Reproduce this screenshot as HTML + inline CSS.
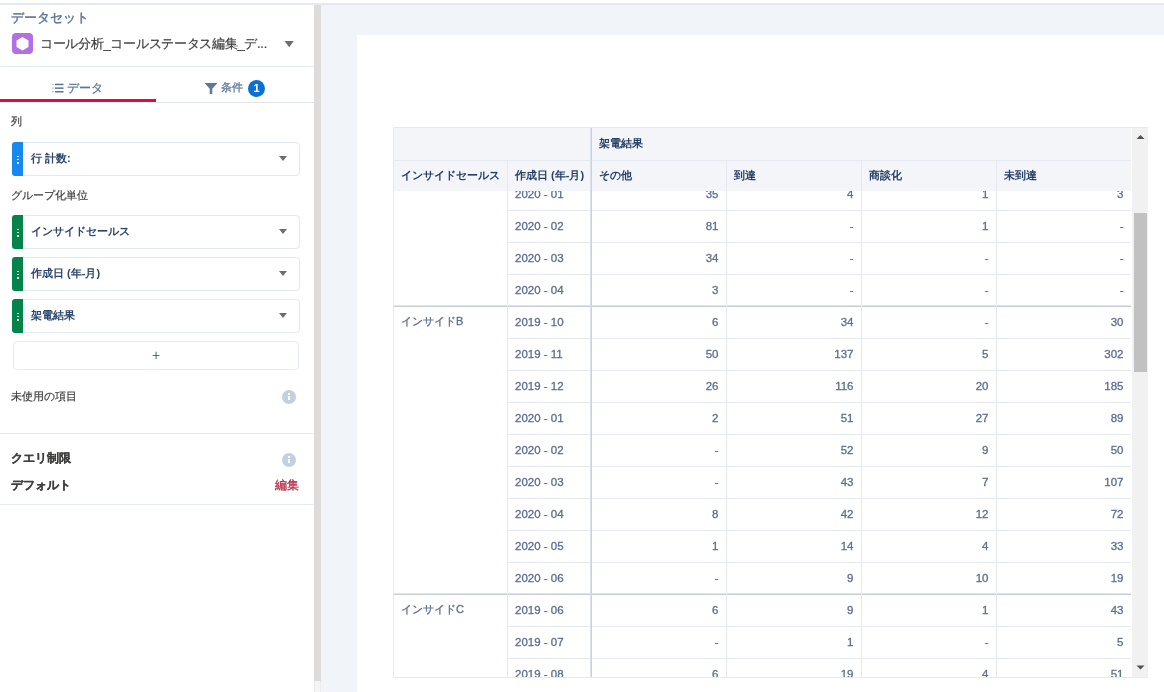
<!DOCTYPE html>
<html><head><meta charset="utf-8">
<style>
*{box-sizing:border-box;margin:0;padding:0}
html,body{width:1164px;height:692px;overflow:hidden;background:#fff;font-family:"Liberation Sans",sans-serif;}
.a{position:absolute;white-space:nowrap}
#topline{left:0;top:3px;width:1164px;height:2px;background:#e5e9ef}
#left{left:0;top:5px;width:314px;height:687px;background:#fff}
#strip{left:314px;top:5px;width:7px;height:676px;background:#dedcdb}
#strip2{left:314px;top:681px;width:7px;height:11px;background:#f5f5f5;border-left:1px solid #ebebeb;border-right:1px solid #ebebeb}
#main{left:321px;top:5px;width:843px;height:687px;background:#f1f4f9}
#card{left:357px;top:35px;width:807px;height:657px;background:#fff}
.lbl{font-size:11px;color:#3e3e3c;line-height:11px;-webkit-text-stroke:0.2px #3e3e3c}
.hr{height:1px;background:#e6ebf1}
.pill{left:12px;width:288px;height:34px;border:1px solid #e3e8ef;border-radius:4px;background:#fff}
.bar{position:absolute;left:-1px;top:-1px;bottom:-1px;width:11px;border-radius:3px 0 0 3px}
.dots{position:absolute;left:4px;width:1.6px;height:1.6px;background:rgba(255,255,255,0.9);border-radius:0.3px}
.ptxt{position:absolute;left:18px;font-size:11px;line-height:11px;font-weight:bold;color:#2d4670}
.tri{position:absolute;width:0;height:0;border-left:4px solid transparent;border-right:4px solid transparent;border-top:5px solid #706e6b}
.info{width:14px;height:14px;border-radius:50%;background:#c3d0df}
.info:after{content:"";position:absolute;left:6px;top:6px;width:2px;height:4px;background:#fff}
.info:before{content:"";position:absolute;left:6px;top:3px;width:2px;height:2px;background:#fff}
</style>
<style>
#tbody .rl{position:absolute;left:113px;width:624px;height:1px;background:#e5e9f1}
#tbody .gl{position:absolute;left:0;width:737px;height:2px;border-top:1px solid #e0e5ec;background:#c5ced9}
#tbody .c1,#tbody .c2,#tbody .cn{position:absolute;height:32px;line-height:32px;font-size:11.5px;color:#5a6e8f;white-space:nowrap;-webkit-text-stroke:0.3px #5a6e8f}
#tbody .c1{font-size:11px}
#tbody .c1{left:7px;margin-top:-1px}
#tbody .c2{left:121px}
#tbody .cn{width:135px;padding-right:7.5px;text-align:right}
.vl{position:absolute;width:1px;background:#e5e9f1}
.hd{position:absolute;font-size:11px;line-height:11px;font-weight:bold;color:#263f66;white-space:nowrap}
</style>
</head><body><div id="root" style="position:relative;width:1164px;height:692px;will-change:transform;background:#fff;overflow:hidden">
<div class="a" id="topline"></div>
<div class="a" id="left"></div>
<div class="a" id="strip"></div>
<div class="a" id="strip2"></div>
<div class="a" id="main"></div>
<div class="a" id="card"></div>

<!-- left panel -->
<div class="a" style="left:11px;top:11px;font-size:13px;line-height:13px;color:#5a7394;-webkit-text-stroke:0.4px #5a7394">データセット</div>
<div class="a" style="left:12px;top:33px;width:21px;height:21px;border-radius:4px;background:#b270e3">
  <svg width="21" height="21" style="position:absolute;left:0;top:0"><polygon points="10.5,4 16.5,7.5 16.5,14 10.5,17.5 4.5,14 4.5,7.5" fill="#fff"/></svg>
</div>
<div class="a" style="left:40px;top:37px;font-size:13px;line-height:13px;color:#3e3e3c;-webkit-text-stroke:0.2px #3e3e3c;letter-spacing:-0.3px">コール分析_コールステータス編集_デ...</div>
<svg class="a" style="left:280px;top:36px" width="20" height="16"><polygon points="4.5,5 13.8,5 9.15,11.2" fill="#706e6b"/></svg>
<div class="a hr" style="left:0;top:66px;width:314px"></div>

<!-- tabs -->
<svg class="a" style="left:52px;top:83px" width="12" height="10"><g fill="#5a7596"><rect x="0.3" y="0.8" width="1.3" height="1.3" opacity="0.6"/><rect x="3" y="0.7" width="8.5" height="1.5"/><rect x="0.3" y="4.5" width="1.3" height="1.3" opacity="0.6"/><rect x="3" y="4.4" width="8.5" height="1.5"/><rect x="0.3" y="8.1" width="1.3" height="1.3" opacity="0.6"/><rect x="3" y="8" width="8.5" height="1.5"/></g></svg>
<div class="a" style="left:67px;top:82px;font-size:12px;line-height:12px;color:#5a7596;-webkit-text-stroke:0.3px #5a7596">データ</div>
<svg class="a" style="left:205px;top:82.5px" width="12" height="12"><polygon points="0,0 12,0 12,0.6 7.3,5.8 7.3,11 4.7,11 4.7,5.8 0,0.6" fill="#5f7899"/></svg>
<div class="a" style="left:221px;top:82px;font-size:11px;line-height:11px;color:#5f7a9c;-webkit-text-stroke:0.3px #5f7a9c">条件</div>
<div class="a" style="left:248px;top:80px;width:17px;height:17px;border-radius:50%;background:#0b70d6;color:#fff;font-size:11px;line-height:17px;font-weight:bold;text-align:center">1</div>
<div class="a" style="left:0;top:99px;width:156px;height:3px;background:#f0043f"></div>
<div class="a hr" style="left:156px;top:102px;width:158px;background:#dfe4ea"></div>

<div class="a lbl" style="left:11px;top:116px">列</div>
<div class="a pill" style="top:142px"><div class="bar" style="background:#1589ee"></div>
  <div class="dots" style="top:12.5px"></div><div class="dots" style="top:15.9px"></div><div class="dots" style="top:19.3px"></div>
  <div class="ptxt" style="top:10px">行 計数:</div><div class="tri" style="left:266px;top:13px"></div></div>

<div class="a lbl" style="left:11px;top:190px">グループ化単位</div>
<div class="a pill" style="top:215px"><div class="bar" style="background:#04844b"></div>
  <div class="dots" style="top:12.5px"></div><div class="dots" style="top:15.9px"></div><div class="dots" style="top:19.3px"></div>
  <div class="ptxt" style="top:10px">インサイドセールス</div><div class="tri" style="left:266px;top:13px"></div></div>
<div class="a pill" style="top:257px"><div class="bar" style="background:#04844b"></div>
  <div class="dots" style="top:12.5px"></div><div class="dots" style="top:15.9px"></div><div class="dots" style="top:19.3px"></div>
  <div class="ptxt" style="top:10px">作成日 (年-月)</div><div class="tri" style="left:266px;top:13px"></div></div>
<div class="a pill" style="top:299px"><div class="bar" style="background:#04844b"></div>
  <div class="dots" style="top:12.5px"></div><div class="dots" style="top:15.9px"></div><div class="dots" style="top:19.3px"></div>
  <div class="ptxt" style="top:10px">架電結果</div><div class="tri" style="left:266px;top:13px"></div></div>
<div class="a" style="left:13px;top:341px;width:286px;height:29px;border:1px solid #e6ebf1;border-radius:4px;text-align:center;font-size:14px;line-height:26px;color:#54698d">+</div>

<div class="a lbl" style="left:11px;top:391px">未使用の項目</div>
<div class="a info" style="left:282px;top:390px"></div>
<div class="a hr" style="left:0;top:433px;width:314px"></div>
<div class="a lbl" style="left:11px;top:452px;font-weight:bold;font-size:12px;line-height:12px">クエリ制限</div>
<div class="a info" style="left:282px;top:453px"></div>
<div class="a lbl" style="left:11px;top:479px;font-weight:bold;font-size:12px;line-height:12px">デフォルト</div>
<div class="a" style="left:275px;top:479px;font-size:12px;line-height:12px;color:#bb3550;-webkit-text-stroke:0.35px #bb3550">編集</div>
<div class="a hr" style="left:0;top:504px;width:314px"></div>

<!-- TABLE -->

<!-- table frame -->
<div class="a" style="left:393px;top:127px;width:755px;height:1px;background:#e5e9f1"></div>
<div class="a" style="left:393px;top:127px;width:1px;height:551px;background:#e5e9f1"></div>
<div class="a" style="left:393px;top:677px;width:755px;height:1px;background:#e5e9f1"></div>
<div class="a" id="tbody" style="left:394px;top:128px;width:737px;height:549px;overflow:hidden">
<div class="rl" style="top:82px"></div>
<div class="c2" style="top:50px">2020 - 01</div>
<div class="cn" style="top:50px;left:197px">35</div>
<div class="cn" style="top:50px;left:332px">4</div>
<div class="cn" style="top:50px;left:467px">1</div>
<div class="cn" style="top:50px;left:602px">3</div>
<div class="rl" style="top:114px"></div>
<div class="c2" style="top:82px">2020 - 02</div>
<div class="cn" style="top:82px;left:197px">81</div>
<div class="cn" style="top:82px;left:332px">-</div>
<div class="cn" style="top:82px;left:467px">1</div>
<div class="cn" style="top:82px;left:602px">-</div>
<div class="rl" style="top:146px"></div>
<div class="c2" style="top:114px">2020 - 03</div>
<div class="cn" style="top:114px;left:197px">34</div>
<div class="cn" style="top:114px;left:332px">-</div>
<div class="cn" style="top:114px;left:467px">-</div>
<div class="cn" style="top:114px;left:602px">-</div>
<div class="gl" style="top:177px"></div>
<div class="c2" style="top:146px">2020 - 04</div>
<div class="cn" style="top:146px;left:197px">3</div>
<div class="cn" style="top:146px;left:332px">-</div>
<div class="cn" style="top:146px;left:467px">-</div>
<div class="cn" style="top:146px;left:602px">-</div>
<div class="rl" style="top:210px"></div>
<div class="c1" style="top:178px">インサイドB</div>
<div class="c2" style="top:178px">2019 - 10</div>
<div class="cn" style="top:178px;left:197px">6</div>
<div class="cn" style="top:178px;left:332px">34</div>
<div class="cn" style="top:178px;left:467px">-</div>
<div class="cn" style="top:178px;left:602px">30</div>
<div class="rl" style="top:242px"></div>
<div class="c2" style="top:210px">2019 - 11</div>
<div class="cn" style="top:210px;left:197px">50</div>
<div class="cn" style="top:210px;left:332px">137</div>
<div class="cn" style="top:210px;left:467px">5</div>
<div class="cn" style="top:210px;left:602px">302</div>
<div class="rl" style="top:274px"></div>
<div class="c2" style="top:242px">2019 - 12</div>
<div class="cn" style="top:242px;left:197px">26</div>
<div class="cn" style="top:242px;left:332px">116</div>
<div class="cn" style="top:242px;left:467px">20</div>
<div class="cn" style="top:242px;left:602px">185</div>
<div class="rl" style="top:306px"></div>
<div class="c2" style="top:274px">2020 - 01</div>
<div class="cn" style="top:274px;left:197px">2</div>
<div class="cn" style="top:274px;left:332px">51</div>
<div class="cn" style="top:274px;left:467px">27</div>
<div class="cn" style="top:274px;left:602px">89</div>
<div class="rl" style="top:338px"></div>
<div class="c2" style="top:306px">2020 - 02</div>
<div class="cn" style="top:306px;left:197px">-</div>
<div class="cn" style="top:306px;left:332px">52</div>
<div class="cn" style="top:306px;left:467px">9</div>
<div class="cn" style="top:306px;left:602px">50</div>
<div class="rl" style="top:370px"></div>
<div class="c2" style="top:338px">2020 - 03</div>
<div class="cn" style="top:338px;left:197px">-</div>
<div class="cn" style="top:338px;left:332px">43</div>
<div class="cn" style="top:338px;left:467px">7</div>
<div class="cn" style="top:338px;left:602px">107</div>
<div class="rl" style="top:402px"></div>
<div class="c2" style="top:370px">2020 - 04</div>
<div class="cn" style="top:370px;left:197px">8</div>
<div class="cn" style="top:370px;left:332px">42</div>
<div class="cn" style="top:370px;left:467px">12</div>
<div class="cn" style="top:370px;left:602px">72</div>
<div class="rl" style="top:434px"></div>
<div class="c2" style="top:402px">2020 - 05</div>
<div class="cn" style="top:402px;left:197px">1</div>
<div class="cn" style="top:402px;left:332px">14</div>
<div class="cn" style="top:402px;left:467px">4</div>
<div class="cn" style="top:402px;left:602px">33</div>
<div class="gl" style="top:465px"></div>
<div class="c2" style="top:434px">2020 - 06</div>
<div class="cn" style="top:434px;left:197px">-</div>
<div class="cn" style="top:434px;left:332px">9</div>
<div class="cn" style="top:434px;left:467px">10</div>
<div class="cn" style="top:434px;left:602px">19</div>
<div class="rl" style="top:498px"></div>
<div class="c1" style="top:466px">インサイドC</div>
<div class="c2" style="top:466px">2019 - 06</div>
<div class="cn" style="top:466px;left:197px">6</div>
<div class="cn" style="top:466px;left:332px">9</div>
<div class="cn" style="top:466px;left:467px">1</div>
<div class="cn" style="top:466px;left:602px">43</div>
<div class="rl" style="top:530px"></div>
<div class="c2" style="top:498px">2019 - 07</div>
<div class="cn" style="top:498px;left:197px">-</div>
<div class="cn" style="top:498px;left:332px">1</div>
<div class="cn" style="top:498px;left:467px">-</div>
<div class="cn" style="top:498px;left:602px">5</div>
<div class="rl" style="top:562px"></div>
<div class="c2" style="top:530px">2019 - 08</div>
<div class="cn" style="top:530px;left:197px">6</div>
<div class="cn" style="top:530px;left:332px">19</div>
<div class="cn" style="top:530px;left:467px">4</div>
<div class="cn" style="top:530px;left:602px">51</div>
</div>

<div class="a" style="left:394px;top:128px;width:737px;height:63px;background:#f3f5f9"></div>
<div class="a" style="left:394px;top:160px;width:737px;height:1px;background:#e5e9f1"></div>
<div class="vl" style="left:507px;top:161px;height:516px"></div>
<div class="vl" style="left:726px;top:161px;height:516px"></div>
<div class="vl" style="left:861px;top:161px;height:516px"></div>
<div class="vl" style="left:996px;top:161px;height:516px"></div>
<div class="a" style="left:590px;top:128px;width:2px;height:549px;border-left:1px solid #dde3ea;background:#c8d1dc"></div>
<div class="hd" style="left:599px;top:138px">架電結果</div>
<div class="hd" style="left:401px;top:170px">インサイドセールス</div>
<div class="hd" style="left:515px;top:170px">作成日 (年-月)</div>
<div class="hd" style="left:599px;top:170px">その他</div>
<div class="hd" style="left:734px;top:170px">到達</div>
<div class="hd" style="left:869px;top:170px">商談化</div>
<div class="hd" style="left:1004px;top:170px">未到達</div>
<!-- scrollbar -->
<div class="a" style="left:1132px;top:128px;width:16px;height:549px;background:#f1f1f1"></div>
<div class="a" style="left:1134px;top:213px;width:13px;height:159px;background:#c1c1c1"></div>
<svg class="a" style="left:1136px;top:134px" width="9" height="6"><polygon points="0.5,5 8.5,5 4.5,1" fill="#505050"/></svg>
<svg class="a" style="left:1136px;top:665px" width="9" height="6"><polygon points="0.5,0.5 8.5,0.5 4.5,4.5" fill="#505050"/></svg>

</div></body></html>
